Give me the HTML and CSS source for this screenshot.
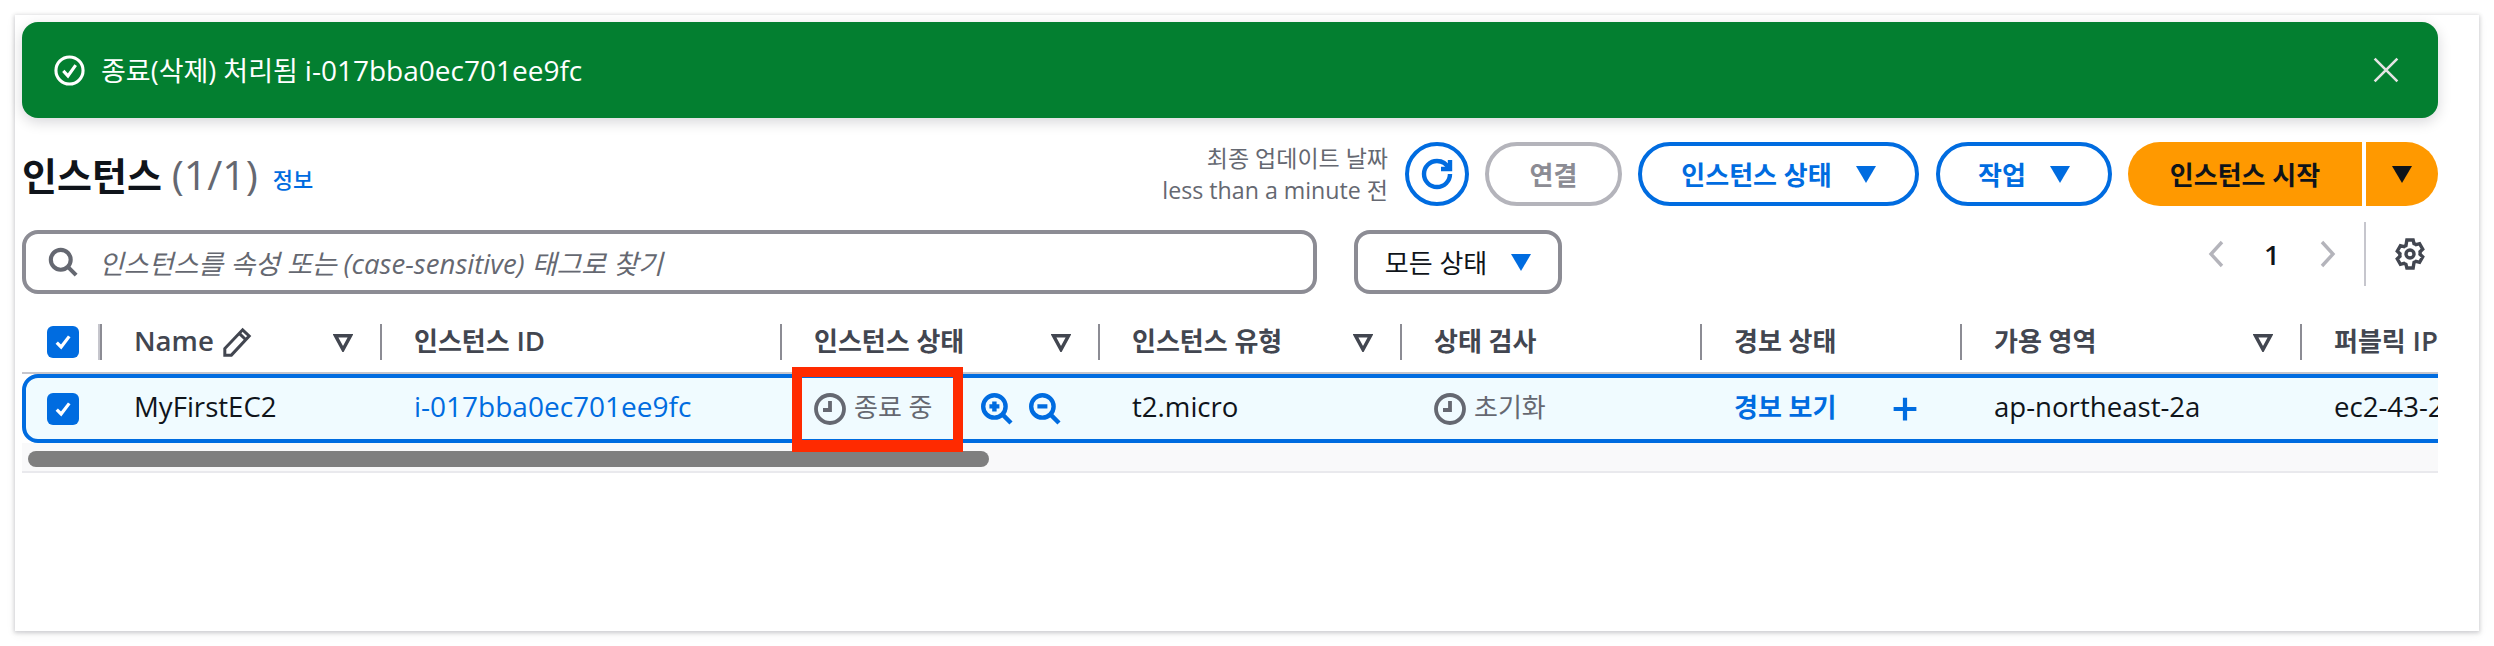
FILE: index.html
```html
<!DOCTYPE html>
<html lang="ko">
<head>
<meta charset="utf-8">
<title>인스턴스</title>
<link rel="stylesheet" href="styles.css">
</head>
<body>
<main class="panel">
  <div class="flash">
    <svg class="ico flash-ico" viewBox="0 0 16 16"><circle cx="8" cy="8" r="7"/><path d="M4.8 8.2 7.2 10.8 11.2 5.2"/></svg>
    <span class="flash-text">종료(삭제) 처리됨 <span class="id">i-017bba0ec701ee9fc</span></span>
    <svg class="ico flash-close" viewBox="0 0 16 16"><path d="M1 1 15 15M15 1 1 15"/></svg>
  </div>

  <div class="toolbar">
    <h1 class="title">인스턴스 <span class="count">(1/1)</span></h1>
    <a class="info">정보</a>
    <div class="updated">최종 업데이트 날짜<br><span class="lat-small">less than a minute</span> 전</div>
    <button class="btn round"><svg class="ico refresh" viewBox="0 0 16 16"><path d="M14.5 8A6.5 6.5 0 1 1 8 1.5c2.6 0 4.8 1.5 5.9 3.8"/><path d="M14.5 1v4.5H10"/></svg></button>
    <button class="btn disabled">연결</button>
    <button class="btn state">인스턴스 상태<i class="caret"></i></button>
    <button class="btn actions">작업<i class="caret"></i></button>
    <div class="split">
      <button class="primary main">인스턴스 시작</button>
      <button class="primary side"><i class="caret dark"></i></button>
    </div>
  </div>

  <div class="filters">
    <div class="search">
      <svg class="ico search-ico" viewBox="0 0 16 16"><circle cx="6.8" cy="6.8" r="5.3"/><path d="M10.6 10.6 15 15"/></svg>
      <span class="placeholder">인스턴스를 속성 또는 <span class="lat">(case-sensitive)</span> 태그로 찾기</span>
    </div>
    <button class="select">모든 상태<i class="caret"></i></button>
    <div class="pager">
      <svg class="ico chev" viewBox="0 0 16 28"><path d="M14 2 3 14 14 26"/></svg>
      <span class="page lat">1</span>
      <svg class="ico chev" viewBox="0 0 16 28"><path d="M2 2 13 14 2 26"/></svg>
      <span class="pager-div"></span>
      <svg class="ico gear" viewBox="0 0 16 16"><path d="M6.44 1h3.12l.45 1.8c.36.13.7.33 1 .57l1.79-.51 1.56 2.7-1.34 1.29a4.6 4.6 0 0 1 0 1.3l1.34 1.29-1.56 2.7-1.79-.51c-.3.24-.64.44-1 .57L9.56 15H6.44l-.45-1.8a4 4 0 0 1-1-.57l-1.79.51-1.56-2.7 1.34-1.29a4.6 4.6 0 0 1 0-1.3L1.64 6.56l1.56-2.7 1.79.51c.3-.24.64-.44 1-.57z"/><circle cx="8" cy="8" r="2"/></svg>
    </div>
  </div>

  <div class="table-wrap">
    <div class="table">
      <div class="thead">
        <div class="th first"><span class="checkbox"><svg class="ico check" viewBox="0 0 16 16"><path d="M3 8.5 6.5 12 13 3.5"/></svg></span></div>
        <div class="th"><span class="lbl lat">Name</span><svg class="ico pencil" viewBox="0 0 16 16"><path d="M5 15 1.5 15 1.5 11.5 11 1.5 14.5 4.8z"/><path d="M9.2 3.4 12.7 6.8"/></svg><svg class="ico filter" viewBox="0 0 16 16"><path d="M2 3h12L8 14z"/></svg></div>
        <div class="th"><span class="lbl">인스턴스 <span class="lat">ID</span></span></div>
        <div class="th"><span class="lbl">인스턴스 상태</span><svg class="ico filter" viewBox="0 0 16 16"><path d="M2 3h12L8 14z"/></svg></div>
        <div class="th"><span class="lbl">인스턴스 유형</span><svg class="ico filter" viewBox="0 0 16 16"><path d="M2 3h12L8 14z"/></svg></div>
        <div class="th"><span class="lbl">상태 검사</span></div>
        <div class="th"><span class="lbl">경보 상태</span></div>
        <div class="th"><span class="lbl">가용 영역</span><svg class="ico filter" viewBox="0 0 16 16"><path d="M2 3h12L8 14z"/></svg></div>
        <div class="th"><span class="lbl">퍼블릭 <span class="lat">IPv4 DNS</span></span></div>
      </div>
      <div class="row">
        <div class="td first"><span class="checkbox"><svg class="ico check" viewBox="0 0 16 16"><path d="M3 8.5 6.5 12 13 3.5"/></svg></span></div>
        <div class="td"><span class="lbl lat">MyFirstEC2</span></div>
        <div class="td link"><span class="lbl id">i-017bba0ec701ee9fc</span></div>
        <div class="td muted">
          <svg class="ico clock" viewBox="0 0 16 16"><circle cx="8" cy="8" r="7"/><path d="M8 4v4.5H4.5"/></svg><span class="lbl">종료 중</span>
          <svg class="ico zoom z-in" viewBox="0 0 16 16"><circle cx="6.7" cy="6.7" r="5.6"/><path d="M10.7 10.7 15 15M4.2 6.7h5M6.7 4.2v5"/></svg>
          <svg class="ico zoom" viewBox="0 0 16 16"><circle cx="6.7" cy="6.7" r="5.6"/><path d="M10.7 10.7 15 15M4.2 6.7h5"/></svg>
        </div>
        <div class="td"><span class="lbl lat">t2.micro</span></div>
        <div class="td muted"><svg class="ico clock" viewBox="0 0 16 16"><circle cx="8" cy="8" r="7"/><path d="M8 4v4.5H4.5"/></svg><span class="lbl">초기화</span></div>
        <div class="td link strong"><span class="lbl">경보 보기</span><svg class="ico plus" viewBox="0 0 16 16"><path d="M8 1v14M1 8h14"/></svg></div>
        <div class="td"><span class="lbl lat">ap-northeast-2a</span></div>
        <div class="td"><span class="lbl lat">ec2-43-201-1-1.ap-northeast-2</span></div>
      </div>
    </div>
    <div class="scrolltrack"><div class="thumb"></div></div>
    <div class="callout"></div>
  </div>
</main>
</body>
</html>
```
FILE: styles.css
```css
* { box-sizing: border-box; }
html, body { margin: 0; height: 646px; overflow: hidden; background: #fff; }
body {
  padding: 15px;
  font-family: "Open Sans", "Noto Sans CJK KR", sans-serif;
  font-size: 26px;
  color: #0f141a;
}
.lat { font-size: 27.6px; }
.id { font-size: 28px; }
.lat-small { font-size: 23.2px; }
.lbl { display: block; padding-bottom: 5px; }
.panel {
  width: 2464px;
  height: 616px;
  padding: 7px 41px 0 7px;
  background: #fff;
  box-shadow: 0 1px 4px 1px rgba(0, 7, 22, .16), 0 3px 10px rgba(0, 7, 22, .06);
}
.ico { fill: none; stroke: currentColor; stroke-width: 2; flex: none; display: block; }

/* flash */
.flash {
  display: flex;
  align-items: center;
  height: 96px;
  padding: 0 39px 0 32px;
  background: #037f30;
  border-radius: 16px;
  color: #fff;
  box-shadow: 0 4px 14px rgba(0, 7, 22, .16);
}
.flash-ico { width: 31px; height: 31px; margin-right: 16px; stroke-width: 1.6; }
.flash-text { flex: 1; font-size: 27px; padding-bottom: 2px; }
.flash-close { width: 26px; height: 26px; stroke: #e4e4e4; stroke-width: 1.6; }

/* toolbar */
.toolbar { display: flex; align-items: center; height: 64px; margin-top: 24px; }
.title { margin: 0; font-size: 38px; font-weight: 700; line-height: 44px; white-space: nowrap; }
.count { font-size: 41px; font-weight: 400; color: #656871; }
.info { margin-left: 15px; margin-top: 8px; font-size: 22px; font-weight: 500; color: #006ce0; }
.updated {
  margin-left: auto;
  margin-right: 17px;
  text-align: right;
  font-size: 23px;
  line-height: 32px;
  color: #656871;
}
.btn {
  display: flex;
  align-items: center;
  justify-content: center;
  height: 64px;
  padding: 0;
  background: #fff;
  border: 4px solid #006ce0;
  border-radius: 32px;
  font: inherit;
  font-weight: 700;
  color: #006ce0;
}
.round { width: 64px; margin-right: 16px; }
.refresh { width: 32px; height: 32px; stroke-width: 2.2; }
.disabled { width: 137px; margin-right: 16px; border-color: #b4b4bb; color: #8c8c94; }
.state { width: 281px; margin-right: 17px; }
.actions { width: 176px; margin-right: 16px; }
.caret {
  display: block;
  margin-left: 24px;
  width: 0;
  height: 0;
  border-left: 10.5px solid transparent;
  border-right: 10.5px solid transparent;
  border-top: 17px solid #006ce0;
}
.caret.dark { margin: 0; border-top-color: #0f141a; }
.split { display: flex; gap: 4px; }
.primary {
  display: flex;
  align-items: center;
  justify-content: center;
  height: 64px;
  padding: 0;
  border: 0;
  background: #ff9900;
  font: inherit;
  font-weight: 700;
  color: #0f141a;
}
.main { width: 234px; border-radius: 32px 0 0 32px; }
.side { width: 72px; border-radius: 0 32px 32px 0; }

/* filters */
.filters { display: flex; align-items: center; height: 64px; margin-top: 24px; }
.search {
  display: flex;
  align-items: center;
  width: 1295px;
  height: 64px;
  padding-left: 22px;
  border: 4px solid #8c8c94;
  border-radius: 16px;
  margin-right: 37px;
}
.search-ico { width: 30px; height: 30px; stroke: #656871; stroke-width: 2.2; margin-right: 21px; }
.placeholder { font-style: italic; font-size: 27px; color: #656871; }
.select {
  display: flex;
  align-items: center;
  justify-content: center;
  width: 208px;
  height: 64px;
  padding: 0;
  border: 4px solid #8c8c94;
  border-radius: 16px;
  background: #fff;
  font: inherit;
  color: #0f141a;
}
.pager {
  display: flex;
  align-items: center;
  margin-left: auto;
  margin-right: 12px;
  height: 64px;
  margin-top: -16px;
}
.chev { width: 16px; height: 28px; stroke: #b4b4bb; stroke-width: 3.4; }
.page { width: 96px; text-align: center; font-weight: 600; }
.pager-div { width: 2px; height: 64px; margin: 0 28px; background: #c6c6cd; }
.gear { width: 32px; height: 32px; stroke: #424650; stroke-width: 1.7; }

/* table */
.table-wrap { position: relative; width: 2416px; margin-top: 20px; padding-top: 10px; overflow: hidden; }
.table { width: 2578px; }
.thead, .row {
  display: grid;
  grid-template-columns: 78px 280px 400px 318px 302px 300px 260px 340px 300px;
}
.thead { height: 50px; border-bottom: 2px solid #c6c6cd; }
.th {
  display: flex;
  align-items: center;
  gap: 7px;
  height: 36px;
  padding-left: 32px;
  border-left: 2px solid #8c8c94;
  font-weight: 600;
  color: #424650;
  white-space: nowrap;
}
.th.first { padding-left: 25px; border-left: 0; border-right: 2px solid #c6c6cd; height: 36px; }
.filter { width: 20px; height: 20px; margin-left: auto; margin-right: 27px; stroke: #424650; stroke-width: 2.8; }
.pencil { width: 30px; height: 30px; margin-left: 1px; stroke: #424650; stroke-width: 1.6; }
.checkbox {
  display: flex;
  align-items: center;
  justify-content: center;
  width: 32px;
  height: 32px;
  background: #006ce0;
  border-radius: 6px;
}
.check { width: 20px; height: 20px; stroke: #fff; stroke-width: 2.6; }
.row {
  height: 69px;
  border: 4px solid #006ce0;
  border-radius: 16px;
  background: #f0fbff;
  grid-template-columns: 74px 280px 400px 318px 302px 300px 260px 340px 300px;
}
.td {
  display: flex;
  align-items: center;
  padding-left: 34px;
  white-space: nowrap;
}
.td.first { padding-left: 21px; }
.link { color: #006ce0; }
.strong { font-weight: 700; }
.muted { color: #656871; }
.clock { width: 32px; height: 32px; margin-right: 8px; stroke-width: 1.9; }
.zoom { width: 32px; height: 32px; margin-left: 16px; color: #006ce0; stroke-width: 2.2; }
.z-in { margin-left: 48px; }
.plus { width: 26px; height: 26px; margin-left: 56px; stroke: #006ce0; stroke-width: 2.6; }

.scrolltrack {
  height: 30px;
  padding: 8px 0 0 6px;
  background: #f9f9fa;
  border-top: 0;
  border-bottom: 2px solid #e9e9ed;
}
.thumb { width: 961px; height: 16px; background: #7f7f7f; border-radius: 8px; }

.callout {
  position: absolute;
  left: 770px;
  top: 53px;
  width: 171px;
  height: 85px;
  border: 10px solid #ff2a00;
  border-bottom-width: 12px;
}
```
